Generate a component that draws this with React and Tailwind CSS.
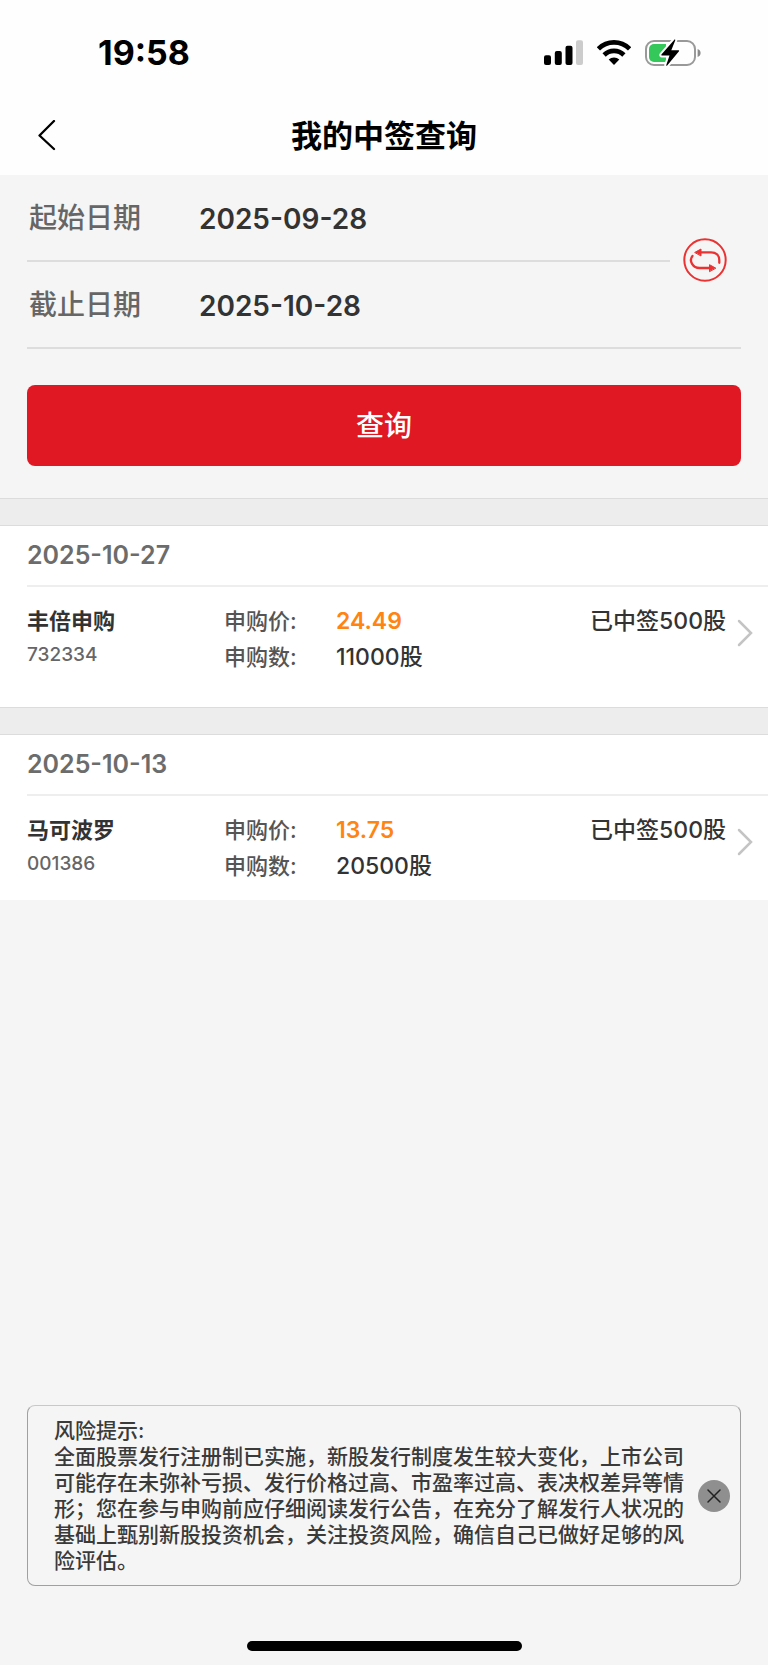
import React, { useState } from 'react';

const RECORDS = [
  {
    date: '2025-10-27',
    name: '丰倍申购',
    code: '732334',
    price: '24.49',
    amount: '11000',
    won: '500',
  },
  {
    date: '2025-10-13',
    name: '马可波罗',
    code: '001386',
    price: '13.75',
    amount: '20500',
    won: '500',
  },
];

const SignalIcon = () => (
  <svg width="39" height="26" viewBox="0 0 39 26" aria-hidden="true">
    <rect x="0" y="15.3" width="7" height="9.7" rx="2" />
    <rect x="10.8" y="11" width="7" height="14" rx="2" />
    <rect x="21.5" y="5.7" width="7" height="19.3" rx="2" />
    <rect x="32" y="0.3" width="7" height="24.7" rx="2" fill="#cccccc" />
  </svg>
);

const WifiIcon = () => (
  <svg width="34" height="26" viewBox="0 0 34 26" aria-hidden="true">
    <path d="M1.4 8.9a22 22 0 0 1 31.2 0" fill="none" stroke="#000" strokeWidth="4.6" />
    <path d="M7.1 15a14 14 0 0 1 19.8 0" fill="none" stroke="#000" strokeWidth="4.6" />
    <path d="M17 25l-5.3-5.4a7.6 7.6 0 0 1 10.6 0z" />
  </svg>
);

const BatteryIcon = () => (
  <svg width="56" height="28" viewBox="0 -1 56 28" aria-hidden="true">
    <rect x="1" y="1" width="49" height="24" rx="8" fill="none" stroke="#999999" strokeWidth="2" />
    <path d="M52.6 9c4 1.2 4 6.8 0 8z" fill="#8a8a8a" />
    <path d="M9 4h12v18H9a5 5 0 0 1-5-5V9a5 5 0 0 1 5-5z" fill="#34c759" />
    <path
      d="M29.6-.6L16.4 14.6q-.5.9.5.9h7.6l-3.3 9.7q.2 1 1 .2L34 11.2q.5-1-.5-1h-7.2l4-10q-.1-1-.7-.8z"
      stroke="#fff"
      strokeWidth="4"
      paintOrder="stroke"
      strokeLinejoin="round"
    />
  </svg>
);

const SwapIcon = () => (
  <svg width="44" height="44" viewBox="0 0 44 44" fill="none" stroke="#eb3232" strokeWidth="2.3" strokeLinecap="round" aria-hidden="true">
    <circle cx="22" cy="22" r="20.7" strokeWidth="2" />
    <path d="M17 14.300h11c5 0 8.300 3 8.300 8v2.500" />
    <path d="M9.500 18c-4 5 .5 12 7 12h11" />
    <path d="M12 14.300l6-3.300v6.600z" fill="#eb3232" strokeWidth="1" strokeLinejoin="round" />
    <path d="M32.500 30l-6-3.300v6.600z" fill="#eb3232" strokeWidth="1" strokeLinejoin="round" />
  </svg>
);

const StatusBar = () => (
  <div className="flex h-[97px] items-center justify-between pt-2 pr-[67px] pl-[98px]">
    <span className="text-[34px] font-bold">19:58</span>
    <div className="flex items-center gap-[14px]">
      <SignalIcon />
      <WifiIcon />
      <BatteryIcon />
    </div>
  </div>
);

const NavBar = () => (
  <div className="grid h-[78px] grid-cols-[1fr_auto_1fr] items-center px-[35px]">
    <button type="button" aria-label="返回" className="w-6">
      <svg width="24" height="32" viewBox="0 0 24 32" fill="none" stroke="#000" strokeWidth="2.3" strokeLinecap="round" strokeLinejoin="round">
        <path d="M19 1L4.500 15.500L19 29" />
      </svg>
    </button>
    <h1 className="text-[31px] font-bold">我的中签查询</h1>
  </div>
);

const DateField = ({ id, label, value, onChange }) => (
  <div className="flex h-[87px] items-center border-b-2 border-[#dddddd]">
    <label htmlFor={id} className="w-[172px] shrink-0 pl-[2px] text-[28px] font-medium text-[#666666]">
      {label}
    </label>
    <input
      id={id}
      type="text"
      value={value}
      onChange={(e) => onChange(e.target.value)}
      className="min-w-0 flex-1 bg-transparent pt-[2px] text-[28px] font-semibold text-[#333333] outline-none"
    />
  </div>
);

const SearchForm = () => {
  const [startDate, setStartDate] = useState('2025-09-28');
  const [endDate, setEndDate] = useState('2025-10-28');

  const swapDates = () => {
    setStartDate(endDate);
    setEndDate(startDate);
  };

  return (
    <form className="px-[27px] pb-8" onSubmit={(e) => e.preventDefault()}>
      <div className="relative">
        <div className="mr-[71px]">
          <DateField id="start-date" label="起始日期" value={startDate} onChange={setStartDate} />
        </div>
        <DateField id="end-date" label="截止日期" value={endDate} onChange={setEndDate} />
        <button type="button" onClick={swapDates} aria-label="交换日期" className="absolute top-[63px] right-[14px]">
          <SwapIcon />
        </button>
      </div>
      <button type="submit" className="mt-9 h-[81px] w-full rounded-lg bg-[#e01824] text-[28px] font-medium text-white">
        查询
      </button>
    </form>
  );
};

const Record = ({ record }) => (
  <li className="bg-white not-last:pb-4">
    <div className="h-7 border-y border-t-[#dcdcdc] border-b-[#dcdcdc] bg-[#ededed]" />
    <div className="ml-[27px] flex h-[61px] items-center border-b-2 border-[#eeeeee]">
      <h2 className="text-[25px] font-semibold text-[#6c6c6c]">{record.date}</h2>
    </div>
    <a href="#detail" className="flex items-start py-4 pr-[15px] pl-[27px] text-[22px] leading-9 text-[#333333]">
      <div className="w-[197px]">
        <p className="font-bold">{record.name}</p>
        <p className="text-[19px] leading-8 font-medium text-[#666666]">{record.code}</p>
      </div>
      <dl className="grid flex-1 grid-cols-[112px_1fr]">
        <dt className="font-medium text-[#555555]">申购价:</dt>
        <dd className="text-[23px] font-semibold text-[#ff8411]">{record.price}</dd>
        <dt className="font-medium text-[#555555]">申购数:</dt>
        <dd className="text-[23px] font-medium">{record.amount}股</dd>
      </dl>
      <p className="text-[23px] font-medium">已中签{record.won}股</p>
      <svg width="16" height="28" viewBox="0 0 16 28" fill="none" stroke="#c4c4c4" strokeWidth="2.5" strokeLinecap="round" className="mt-4 ml-[11px]" aria-hidden="true">
        <path d="M2 2l12 12L2 26" />
      </svg>
    </a>
  </li>
);

const RiskNotice = ({ onClose }) => (
  <aside className="mx-[27px] flex min-h-[181px] items-center rounded-lg border border-[#a0a0a0] border-t-[#c8c8c8] pr-[10px] pl-[26px]">
    <p className="flex-1 text-[21px] leading-[26px] font-medium text-[#3a3a3a]">
      风险提示:
      <br />
      全面股票发行注册制已实施，新股发行制度发生较大变化，上市公司可能存在未弥补亏损、发行价格过高、市盈率过高、表决权差异等情形；您在参与申购前应仔细阅读发行公告，在充分了解发行人状况的基础上甄别新股投资机会，关注投资风险，确信自己已做好足够的风险评估。
    </p>
    <button type="button" onClick={onClose} aria-label="关闭" className="flex size-8 items-center justify-center rounded-full bg-[#8f8f8f]">
      <svg width="14" height="14" viewBox="0 0 14 14" stroke="#222222" strokeWidth="1.5" strokeLinecap="round">
        <path d="M1 1l12 12M13 1L1 13" />
      </svg>
    </button>
  </aside>
);

const App = () => {
  const [showNotice, setShowNotice] = useState(true);

  return (
    <div lang="zh-CN" className="flex min-h-screen flex-col bg-[#f5f5f5] font-['Inter','Noto_Sans_CJK_SC',sans-serif] text-black">
      <header className="bg-[#fefefe]">
        <StatusBar />
        <NavBar />
      </header>
      <main className="flex flex-1 flex-col">
        <SearchForm />
        <ul>
          {RECORDS.map((record) => (
            <Record key={record.code} record={record} />
          ))}
        </ul>
        <div className="mt-auto pt-8">
          {showNotice && <RiskNotice onClose={() => setShowNotice(false)} />}
        </div>
      </main>
      {/* Home indicator */}
      <div className="flex justify-center pt-[55px] pb-[14px]">
        <div className="h-[10px] w-[275px] rounded-full bg-black" />
      </div>
    </div>
  );
};

export default App;
